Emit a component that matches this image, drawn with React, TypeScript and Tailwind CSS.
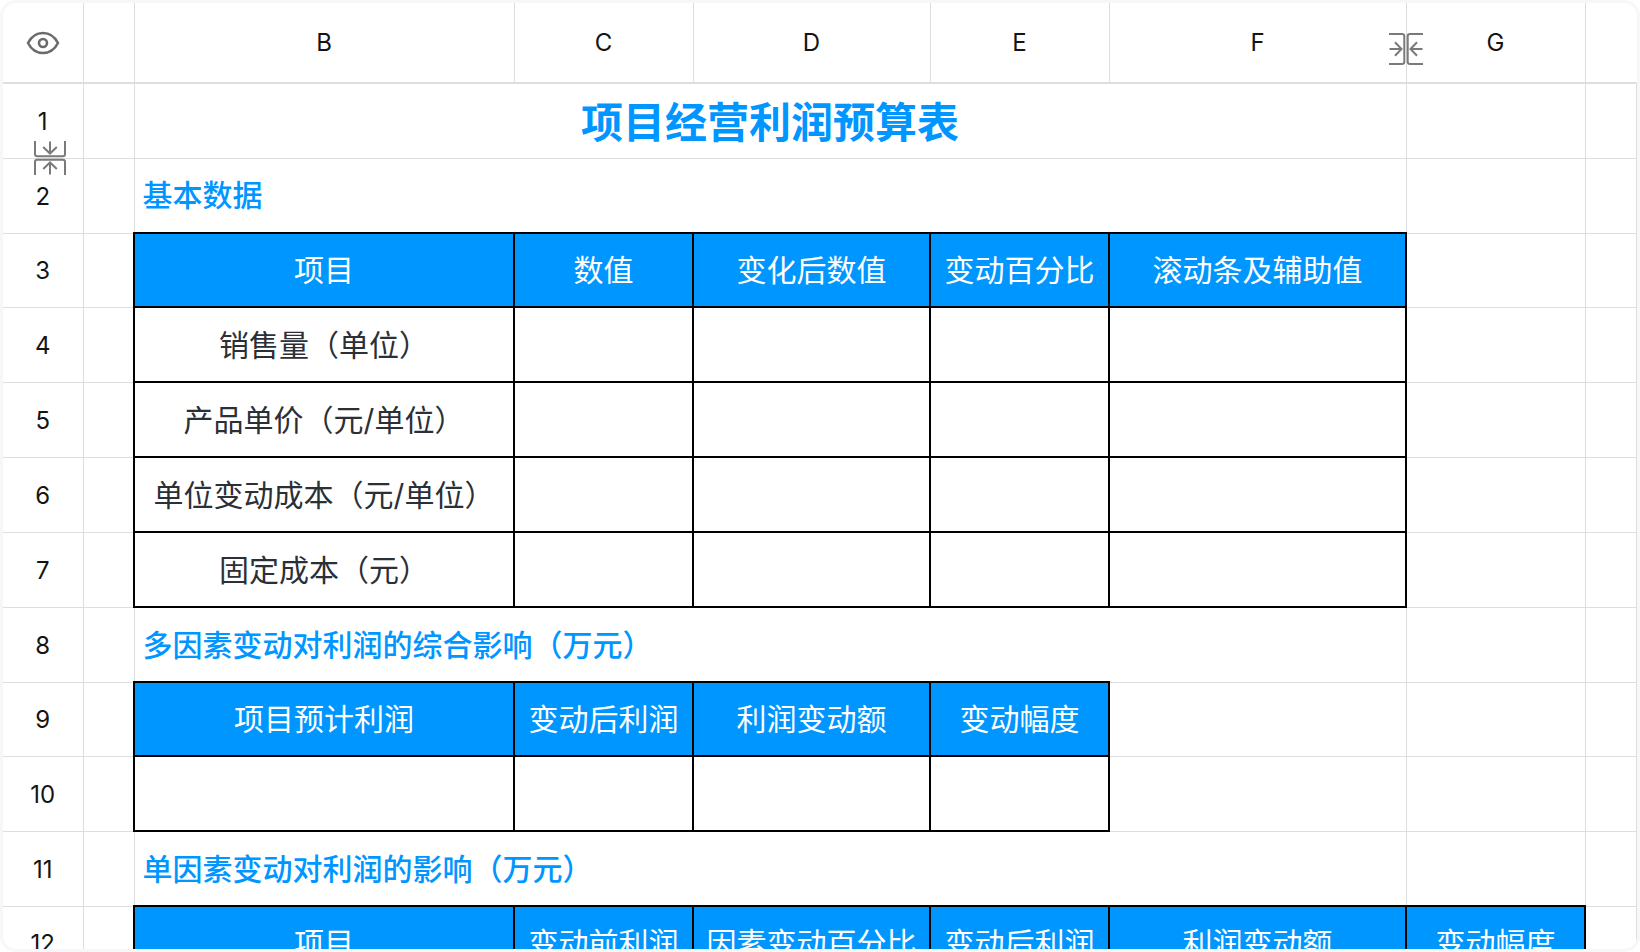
import React from "react";
import clsx from "clsx";

type Kind = "title" | "section" | "head" | "body" | "plain";

interface CellData {
  text?: string;
  kind: Kind;
  span?: number;
}

interface RowData {
  id: number;
  cells: CellData[];
}

const COLUMN_WIDTHS = [
  "w-[80px]",
  "w-[51px]",
  "w-[380px]",
  "w-[179px]",
  "w-[237px]",
  "w-[179px]",
  "w-[297px]",
  "w-[179px]",
];

const LETTERS = ["", "B", "C", "D", "E", "F", "G", ""];

const head = (...texts: string[]): CellData[] =>
  texts.map((text) => ({ text, kind: "head" }));

const body = (count: number, text = ""): CellData[] =>
  Array.from({ length: count }, (_, i) => ({
    text: i === 0 ? text : "",
    kind: "body",
  }));

const plain = (count: number): CellData[] =>
  Array.from({ length: count }, () => ({ kind: "plain" }));

const rows: RowData[] = [
  { id: 1, cells: [{ text: "项目经营利润预算表", kind: "title", span: 5 }, ...plain(2)] },
  { id: 2, cells: [{ text: "基本数据", kind: "section", span: 5 }, ...plain(2)] },
  { id: 3, cells: [...head("项目", "数值", "变化后数值", "变动百分比", "滚动条及辅助值"), ...plain(2)] },
  { id: 4, cells: [...body(5, "销售量（单位）"), ...plain(2)] },
  { id: 5, cells: [...body(5, "产品单价（元/单位）"), ...plain(2)] },
  { id: 6, cells: [...body(5, "单位变动成本（元/单位）"), ...plain(2)] },
  { id: 7, cells: [...body(5, "固定成本（元）"), ...plain(2)] },
  { id: 8, cells: [{ text: "多因素变动对利润的综合影响（万元）", kind: "section", span: 5 }, ...plain(2)] },
  { id: 9, cells: [...head("项目预计利润", "变动后利润", "利润变动额", "变动幅度"), ...plain(3)] },
  { id: 10, cells: [...body(4), ...plain(3)] },
  { id: 11, cells: [{ text: "单因素变动对利润的影响（万元）", kind: "section", span: 5 }, ...plain(2)] },
  {
    id: 12,
    cells: [
      ...head("项目", "变动前利润", "因素变动百分比", "变动后利润", "利润变动额", "变动幅度"),
      ...plain(1),
    ],
  },
];

const kindStyles: Record<Kind, string> = {
  title: "border border-[#dedede] pt-1 text-center text-[42px] font-bold text-[#0096ff]",
  section: "border border-[#dedede] pl-2 text-left text-[30px] font-medium text-[#0096ff]",
  head: "border-2 border-black bg-[#0096ff] text-center text-[30px] font-normal text-white",
  body: "border-2 border-black text-center text-[30px] text-[#2b2f36]",
  plain: "border border-[#dedede]",
};

function EyeIcon() {
  return (
    <svg width="34" height="24" viewBox="0 0 34 24" fill="none" stroke="#6b6b6b" strokeWidth="2.6">
      <path d="M2 12C5 6.200 10.500 2 17 2s12 4.200 15 10C29 17.800 23.500 22 17 22S5 17.800 2 12Z" strokeLinejoin="round" />
      <circle cx="17" cy="12" r="4" />
    </svg>
  );
}

function CollapseIcon({ className }: { className?: string }) {
  return (
    <svg
      className={className}
      width="36"
      height="36"
      viewBox="0 0 36 36"
      fill="none"
      stroke="#7a7a7a"
      strokeWidth="2"
    >
      <path d="M3 1V14Q3 16.300 5.300 16.300H30.700Q33 16.300 33 14V1" />
      <path d="M18 1.500V13M11.200 7L18 13.500L24.800 7" />
      <path d="M3 35V22Q3 19.700 5.300 19.700H30.700Q33 19.700 33 22V35" />
      <path d="M18 34.500V23M11.200 29L18 22.500L24.800 29" />
    </svg>
  );
}

function SheetRow({ id, cells }: RowData) {
  const isHead = cells[0].kind === "head";

  return (
    <tr className={isHead ? "h-[74px]" : "h-[75px]"}>
      <th
        scope="row"
        className="relative border-y border-r border-[#dedede] pt-0.5 text-center text-2xl font-normal text-[#141414]"
      >
        {id}
        {id === 1 && (
          <button
            type="button"
            aria-label="Show hidden rows"
            className="absolute -bottom-[18px] left-[29px] z-10"
          >
            <CollapseIcon />
          </button>
        )}
      </th>
      <td className="border border-[#dedede]" />
      {cells.map((cell, i) => {
        const Tag = cell.kind === "head" ? "th" : "td";
        return (
          <Tag
            key={i}
            colSpan={cell.span}
            className={clsx("leading-none whitespace-nowrap", kindStyles[cell.kind])}
          >
            {cell.text}
          </Tag>
        );
      })}
    </tr>
  );
}

export default function App() {
  return (
    <main className="h-screen overflow-hidden rounded-2xl border-[3px] border-[#f7f7f7] bg-white font-[Inter,'Noto_Sans_CJK_SC',sans-serif]">
      <table className="w-full table-fixed border-collapse">
        <colgroup>
          {COLUMN_WIDTHS.map((width, i) => (
            <col key={i} className={width} />
          ))}
          <col />
        </colgroup>
        <thead>
          <tr className="h-20 border-b-2 border-[#dedede]">
            <th className="border-r border-[#dedede]">
              <button type="button" aria-label="Toggle visibility" className="mx-auto block">
                <EyeIcon />
              </button>
            </th>
            {LETTERS.map((letter, i) => (
              <th
                key={i}
                scope="col"
                className={clsx(
                  "relative text-center text-2xl font-normal text-[#141414]",
                  i < LETTERS.length - 1 && "border-r border-[#dedede]"
                )}
              >
                {letter}
                {letter === "F" && (
                  <button
                    type="button"
                    aria-label="Show hidden columns"
                    className="absolute top-7 -right-[18px] z-10"
                  >
                    <CollapseIcon className="-rotate-90" />
                  </button>
                )}
              </th>
            ))}
          </tr>
        </thead>
        <tbody>
          {rows.map((row) => (
            <SheetRow key={row.id} {...row} />
          ))}
        </tbody>
      </table>
    </main>
  );
}
